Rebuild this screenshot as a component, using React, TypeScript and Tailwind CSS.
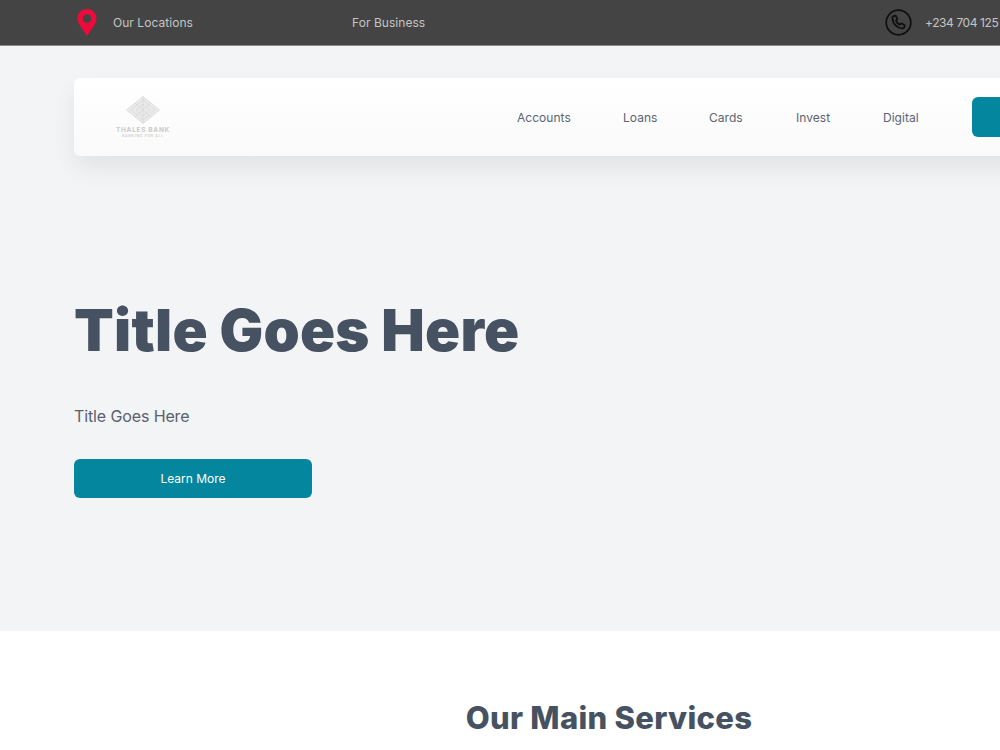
const font = "font-['Inter','Liberation_Sans',sans-serif]";

function Pin() {
  return (
    <svg width="20" height="28" viewBox="0 0 20 28" className="shrink-0">
      <path
        fillRule="evenodd"
        d="M10 0C4.5 0 .5 4.2.5 9.4c0 2.6 1 4.7 2.3 6.9L10 27l7.2-10.7c1.3-2.2 2.3-4.3 2.3-6.9C19.500 4.200 15.500 0 10 0Zm0 5.200a4.300 4.300 0 1 1 0 8.600 4.300 4.300 0 0 1 0-8.600Z"
        fill="#ef0a3c"
      />
    </svg>
  );
}

function PhoneCircle() {
  return (
    <svg width="27" height="27" viewBox="0 0 27 27" fill="none" className="shrink-0" stroke="#0f0f0f">
      <circle cx="13.500" cy="13.500" r="12.300" strokeWidth="1.700" />
      <path
        strokeWidth="1.800"
        strokeLinejoin="round"
        d="M8.200 7.300 10 6.600c.4-.1.700 0 .9.400l1.300 2.600c.2.400.1.700-.2 1l-1 1c.6 1.800 2 3.300 3.900 4.100l1.100-1c.3-.3.600-.3 1-.1l2.400 1.500c.4.200.5.500.3.900l-.7 1.600c-.3.600-.8.900-1.500.8C12.400 19.700 7.500 14.800 7.400 8.700c0-.6.300-1.100.8-1.400Z"
      />
    </svg>
  );
}

function Logo() {
  return (
    <div className="flex w-[54px] flex-col items-center opacity-90">
      <svg width="34" height="28" viewBox="0 0 34 28" fill="none" stroke="#d0d0d0" strokeWidth="0.600">
        <path d="M17 0.500 33.500 14 17 27.500 0.500 14Z" fill="#e8e8e8" />
        <path d="M17 4 29 14 17 24 5 14Z" />
        <path d="M17 8 24 14 17 20 10 14Z" />
        <path d="M17 0.500V27.500M9 7 25 21M25 7 9 21" />
      </svg>
      <span className="mt-[2px] whitespace-nowrap text-[6.500px] leading-[8px] font-bold tracking-[0.7px] text-[#c4c4c4]">
        THALES BANK
      </span>
      <span className="whitespace-nowrap text-[3.500px] leading-[4px] font-semibold tracking-[0.7px] text-[#c8c8c8]">
        BANKING FOR ALL
      </span>
    </div>
  );
}

const navItems = [
  { label: "Accounts", width: "w-[106px]" },
  { label: "Loans", width: "w-[86px]" },
  { label: "Cards", width: "w-[87px]" },
  { label: "Invest", width: "w-[87px]" },
  { label: "Digital", width: "w-[89px]" },
];

export default function App() {
  return (
    <div className={`${font} h-[750px] w-[1000px] overflow-hidden bg-white`}>
      <header className="flex h-[46px] items-center border-b border-[#8a8a8a] bg-[#444444] pl-[77px] text-[12px] tracking-[0.05px] text-[#c4c4c4]">
        <Pin />
        <a className="ml-[16px] w-[239px] whitespace-nowrap">Our Locations</a>
        <a className="w-[533px] whitespace-nowrap">For Business</a>
        <PhoneCircle />
        <span className="ml-[13px] whitespace-nowrap tracking-[-0.4px]">+234 704 125</span>
      </header>

      <section className="h-[585px] overflow-hidden bg-[#f3f4f6] pt-[32px] pl-[74px]">
        <nav className="flex h-[78px] w-[1000px] items-center rounded-l-[6px] bg-gradient-to-b from-white to-[#fafafa] pl-[42px] shadow-[0_12px_24px_rgba(0,0,0,0.07)]">
          <Logo />
          <ul className="mt-[2px] ml-[347px] flex items-center text-[12px] tracking-[0.05px] text-[#5b6472]">
            {navItems.map((item) => (
              <li key={item.label} className={item.width}>
                {item.label}
              </li>
            ))}
          </ul>
          <button className="h-[40px] w-[120px] rounded-[6px] bg-[#03869e]" />
        </nav>

        <h1 className="mt-[139px] text-[58px] leading-[70px] font-black tracking-[0.2px] whitespace-nowrap text-[#465261]">
          Title Goes Here
        </h1>
        <p className="mt-[39px] text-[16px] leading-[24px] tracking-[-0.12px] text-[#58616e]">Title Goes Here</p>
        <button className="mt-[31px] h-[39px] w-[238px] rounded-[6px] bg-[#03869e] text-[12px] text-white">
          Learn More
        </button>
      </section>

      <section className="flex justify-center pt-[66px] pl-[218px]">
        <h2 className="text-[31px] leading-[42px] font-extrabold tracking-[0.3px] whitespace-nowrap text-[#465261]">
          Our Main Services
        </h2>
      </section>
    </div>
  );
}
